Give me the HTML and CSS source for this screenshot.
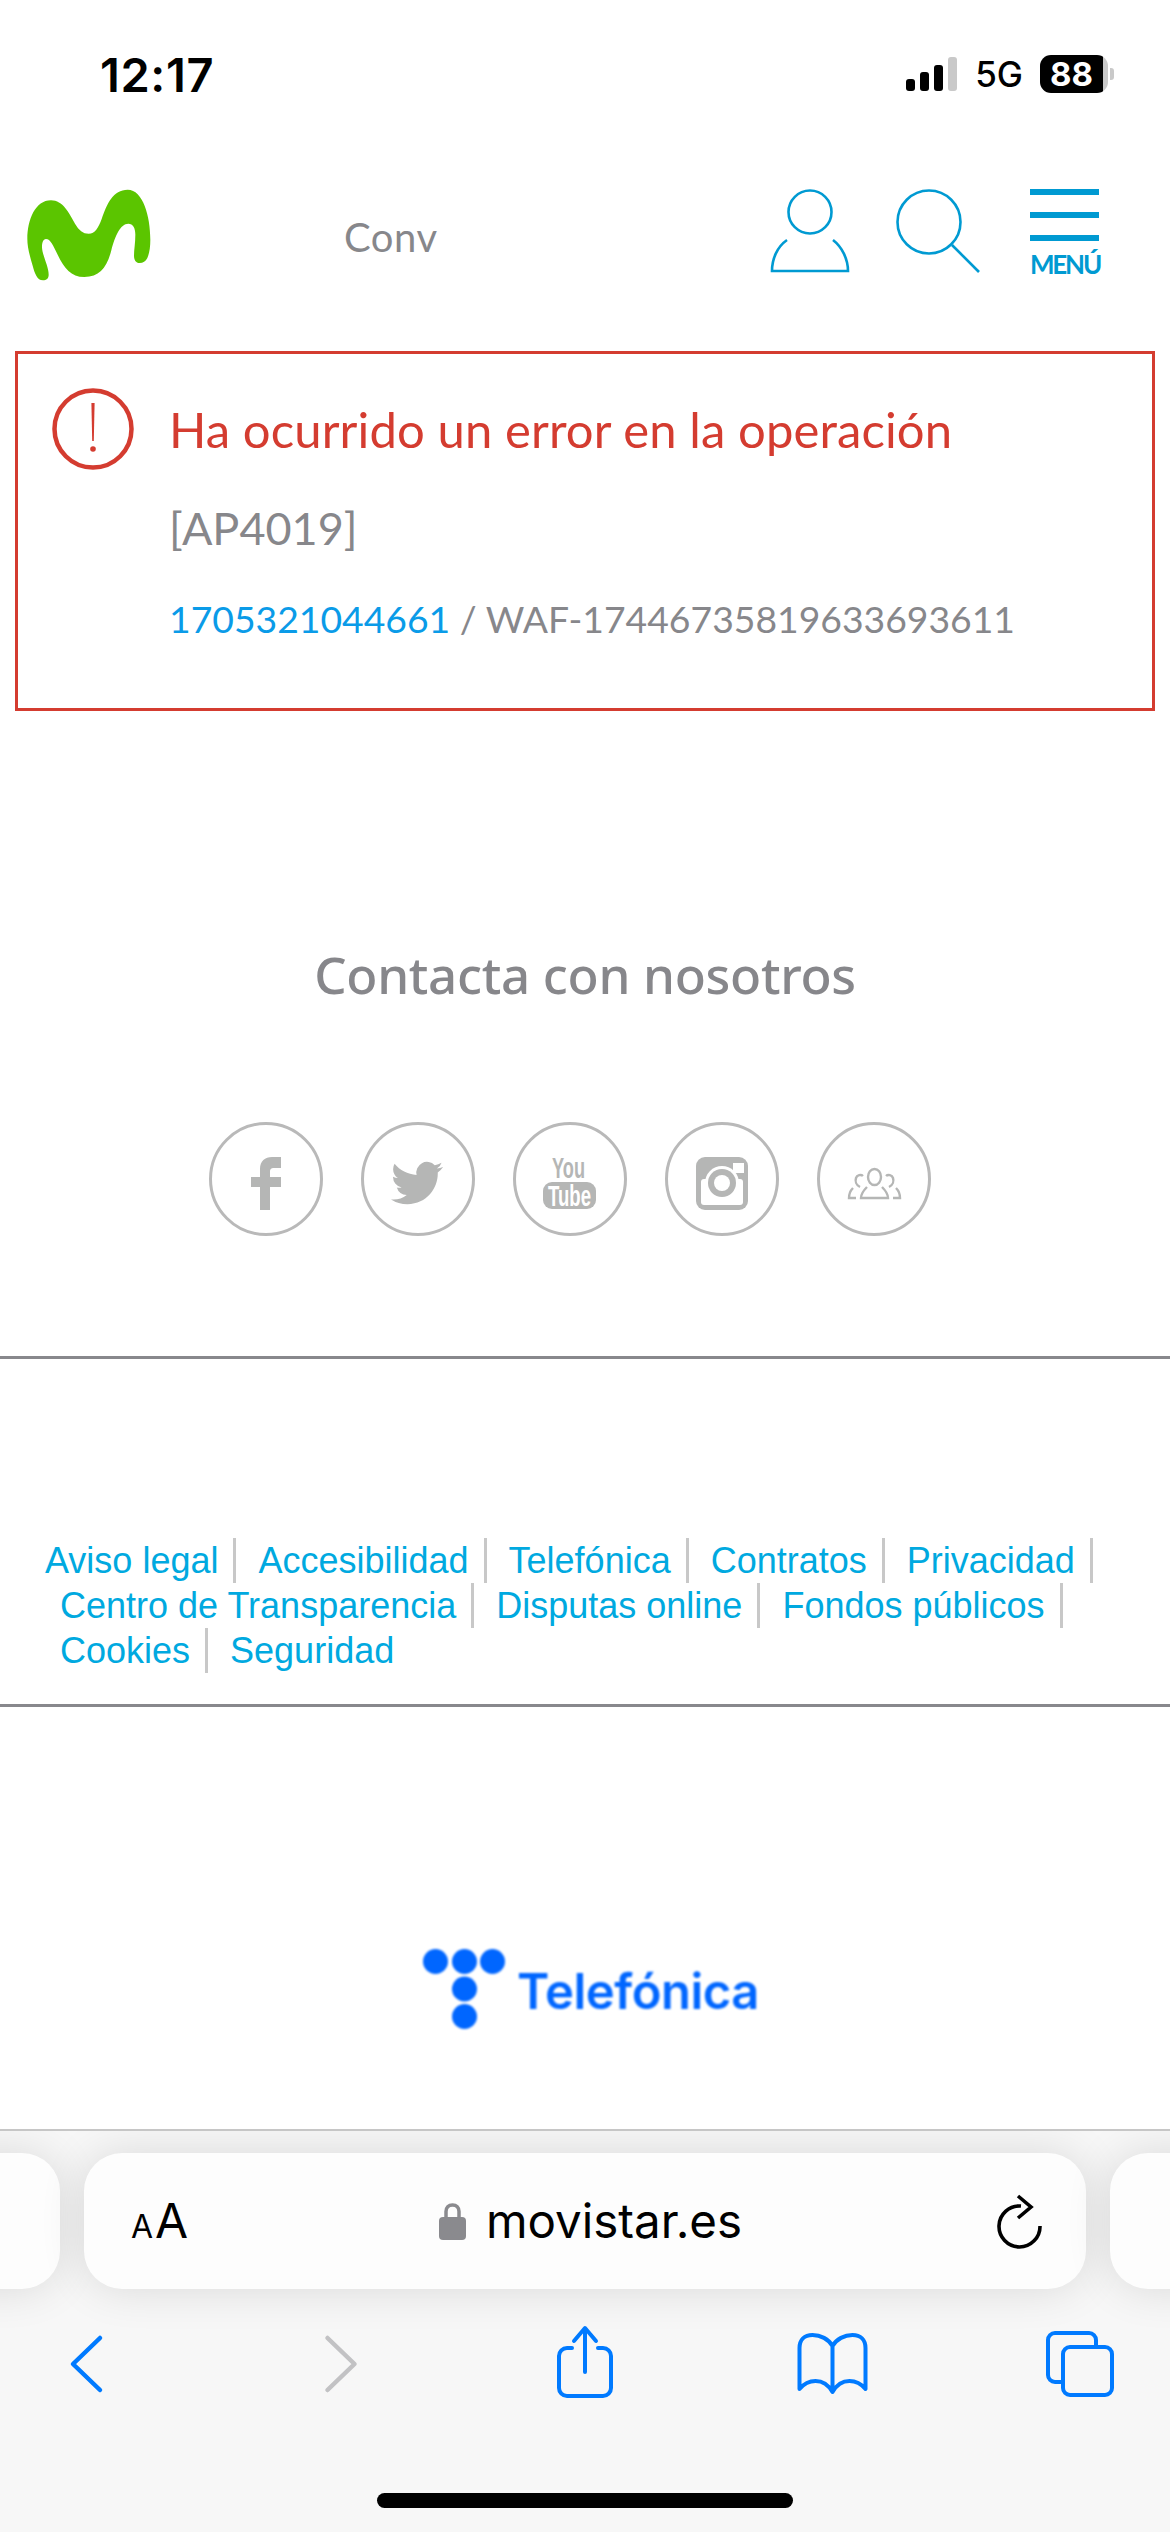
FILE: index.html
```html
<!DOCTYPE html>
<html lang="es">
<head>
  <meta charset="UTF-8">
  <title>Movistar</title>
  <link rel="stylesheet" href="styles.css">
</head>
<body>

  <div class="page">

    <div class="status">
      <span class="time">12:17</span>
      <div class="status-right">
        <div class="signal">
          <i class="bar b1"></i><i class="bar b2"></i><i class="bar b3"></i><i class="bar b4"></i>
        </div>
        <span class="net">5G</span>
        <div class="battery">88</div>
        <i class="battery-nub"></i>
      </div>
    </div>

    <header class="header">
      <svg class="logo" viewBox="80 88 372 276">
        <path fill="#5bc500" d="M128 362C110 362 103 340 97 318C88 288 81 262 81 238C81 180 105 122 152 122C188 122 206 160 224 192C236 212 248 222 265 222C284 222 294 205 304 178C320 132 338 90 382 90C428 90 450 170 450 240C450 262 447 282 441 295C436 305 428 310 418 310C406 310 401 300 401 288C401 270 405 250 405 225C405 205 398 192 384 192C360 192 344 230 333 272C320 322 298 352 252 352C212 352 192 326 172 285C158 256 150 238 137 238C128 238 125 250 125 262C125 285 145 320 145 345C145 356 138 362 128 362Z"/>
      </svg>
      <span class="conv">Conv</span>
      <svg class="ico-user" viewBox="0 0 80 84" fill="none" stroke="#009ad2" stroke-width="2.6">
        <circle cx="40" cy="23" r="21.5"/>
        <path d="M17 51C7 58 2 70 2 82H78C78 70 72 58 63 51"/>
      </svg>
      <svg class="ico-search" viewBox="0 0 84 84" fill="none" stroke="#009ad2" stroke-width="2.6">
        <circle cx="33" cy="33" r="31.5"/>
        <path d="M56 56L83 83"/>
      </svg>
      <div class="menu">
        <i class="menu-line"></i>
        <i class="menu-line"></i>
        <i class="menu-line"></i>
        <span class="menu-text">MENÚ</span>
      </div>
    </header>

    <section class="error">
      <svg class="error-ico" viewBox="0 0 84 84" fill="none" stroke="#d43c30" stroke-width="4.5">
        <circle cx="42" cy="42" r="38.5"/>
        <path d="M40.4 16H43.6L42.8 54H41.2Z" fill="#d43c30" stroke="none"/>
        <circle cx="42" cy="62" r="2.8" fill="#d43c30" stroke="none"/>
      </svg>
      <div class="error-text">
        <h1 class="error-title">Ha ocurrido un error en la operación</h1>
        <p class="error-code">[AP4019]</p>
        <p class="error-ref"><a class="ref-link">1705321044661</a> / WAF-17446735819633693611</p>
      </div>
    </section>

    <h2 class="contact">Contacta con nosotros</h2>

    <div class="social">
      <a class="circle">
        <svg viewBox="0 0 114 114"><path d="M51 88V65H42V55H51V47C51 39 56 35 63 35H72V46H65C62 46 61 47 61 50V55H72V65H61V88Z"/></svg>
      </a>
      <a class="circle">
        <svg viewBox="0 0 114 114"><path transform="translate(30 35) scale(2.17)" d="M23.953 4.57a10 10 0 01-2.825.775 4.958 4.958 0 002.163-2.723c-.951.555-2.005.959-3.127 1.184a4.92 4.92 0 00-8.384 4.482C7.69 8.095 4.067 6.13 1.64 3.162a4.822 4.822 0 00-.666 2.475c0 1.71.87 3.213 2.188 4.096a4.904 4.904 0 01-2.228-.616v.06a4.923 4.923 0 003.946 4.827 4.996 4.996 0 01-2.212.085 4.936 4.936 0 004.604 3.417 9.867 9.867 0 01-6.102 2.105c-.39 0-.779-.023-1.17-.067a13.995 13.995 0 007.557 2.209c9.053 0 13.998-7.496 13.998-13.985 0-.21 0-.42-.015-.63A9.935 9.935 0 0024 4.59z"/></svg>
      </a>
      <a class="circle">
        <svg viewBox="0 0 114 114">
          <text class="yt-you" x="39" y="56" textLength="33" lengthAdjust="spacingAndGlyphs">You</text>
          <rect x="30" y="60" width="53" height="27" rx="9"/>
          <text class="yt-tube" x="35" y="84" textLength="43" lengthAdjust="spacingAndGlyphs">Tube</text>
        </svg>
      </a>
      <a class="circle">
        <svg viewBox="0 0 114 114">
          <rect x="31" y="35" width="52" height="53" rx="9"/>
          <rect class="cut" x="36" y="57" width="42" height="26" rx="3"/>
          <circle class="cut" cx="57" cy="61" r="17"/>
          <circle cx="57" cy="61" r="14"/>
          <circle class="cut" cx="57" cy="61" r="8"/>
          <rect class="cut" x="68" y="41" width="11" height="10"/>
        </svg>
      </a>
      <a class="circle">
        <svg viewBox="0 0 114 114" class="people">
          <ellipse cx="57.5" cy="55" rx="6.5" ry="8"/>
          <path d="M50 65C46 69 44 72 44 76H71C71 72 69 69 65 65"/>
          <path d="M43 65C39 63 38 59 39 56C40 53 44 52 46 54"/>
          <path d="M72 65C76 63 77 59 76 56C75 53 71 52 69 54"/>
          <path d="M36 66C33 69 32 72 32 76H39"/>
          <path d="M79 66C82 69 83 72 83 76H76"/>
        </svg>
      </a>
    </div>

    <hr class="rule rule-top">

    <ul class="links">
      <li class="first">Aviso legal</li>
      <li>Accesibilidad</li>
      <li>Telefónica</li>
      <li>Contratos</li>
      <li>Privacidad</li>
      <li>Centro de Transparencia</li>
      <li>Disputas online</li>
      <li>Fondos públicos</li>
      <li>Cookies</li>
      <li class="last">Seguridad</li>
    </ul>

    <hr class="rule rule-bottom">

    <div class="brand">
      <svg class="brand-dots" viewBox="0 0 84 84">
        <circle cx="12.5" cy="12.5" r="12.5"/>
        <circle cx="41.5" cy="12.5" r="12.5"/>
        <circle cx="69.5" cy="12.5" r="12.5"/>
        <circle cx="41.5" cy="40" r="12.5"/>
        <circle cx="41.5" cy="67.5" r="12.5"/>
      </svg>
      <span class="brand-name">Telefónica</span>
    </div>

    <div class="toolbar">
      <div class="tabs-row">
        <div class="pill pill-side"></div>
        <div class="pill pill-main">
          <span class="aa"><small>A</small>A</span>
          <div class="address">
            <svg class="lock" viewBox="0 0 27 38">
              <path d="M7 17V9.5C7 5.5 9.5 3 13.5 3S20 5.5 20 9.5V17" fill="none" stroke="#8a8a8e" stroke-width="3.5"/>
              <rect y="15" width="27" height="23" rx="4" fill="#8a8a8e"/>
            </svg>
            <span class="url">movistar.es</span>
          </div>
          <svg class="reload" viewBox="996 2190 48 58" fill="none" stroke="#000" stroke-width="3.6">
            <path d="M1040 2224A20.5 20.5 0 1 1 1021 2204"/>
            <path d="M1018 2194L1031 2205L1018 2216"/>
          </svg>
        </div>
        <div class="pill pill-side"></div>
      </div>

      <div class="nav">
        <svg viewBox="51 2322 70 80" fill="none" stroke="#007aff" stroke-width="4.5" stroke-linecap="round" stroke-linejoin="round">
          <path d="M100 2338L73 2364L100 2390" />
        </svg>
        <svg viewBox="299.5 2322 70 80" fill="none" stroke="#c2c2c4" stroke-width="4.5" stroke-linecap="round" stroke-linejoin="round">
          <path d="M327 2338L354 2364L327 2390" />
        </svg>
        <svg viewBox="548 2322 70 80" fill="none" stroke="#007aff" stroke-width="4" stroke-linecap="round" stroke-linejoin="round">
          <path d="M572 2348H567A8 8 0 0 0 559 2356V2388A8 8 0 0 0 567 2396H603A8 8 0 0 0 611 2388V2356A8 8 0 0 0 603 2348H598"/>
          <path d="M585 2372V2329M574 2341L585 2328L596 2341"/>
        </svg>
        <svg viewBox="796.5 2322 70 80" fill="none" stroke="#007aff" stroke-width="4" stroke-linejoin="round">
          <path d="M832 2346C828 2339 820 2335 812 2335C804 2335 799 2340 799 2348V2389C804 2383 810 2381 815 2381C822 2381 828 2385 832 2392C836 2385 842 2381 849 2381C854 2381 860 2383 865 2389V2348C865 2340 860 2335 852 2335C844 2335 836 2339 832 2346ZM832 2346V2392"/>
        </svg>
        <svg viewBox="1045 2322 70 80" fill="none" stroke="#007aff" stroke-width="4">
          <path d="M1063 2382H1055A7 7 0 0 1 1048 2375V2340A7 7 0 0 1 1055 2333H1089A7 7 0 0 1 1096 2340V2347"/>
          <rect x="1063" y="2347" width="49" height="48" rx="7"/>
        </svg>
      </div>

      <div class="home-bar"></div>
    </div>

  </div>

</body>
</html>
```

FILE: styles.css
```css
* {
  box-sizing: border-box;
}

html, body {
  margin: 0;
  padding: 0;
}

body {
  background: #fff;
  font-family: 'Lato', sans-serif;
  color: #87878b;
}

.page {
  width: 1170px;
  height: 2532px;
  overflow: hidden;
  display: flex;
  flex-direction: column;
}

/* status bar */
.status {
  height: 148px;
  display: flex;
  align-items: center;
  justify-content: space-between;
  padding: 0 56px 0 100px;
  color: #000;
  font-family: 'Inter', sans-serif;
}

.time {
  font-size: 47px;
  font-weight: 600;
  letter-spacing: 0.6px;
}

.status-right {
  display: flex;
  align-items: center;
}

.signal {
  display: flex;
  align-items: flex-end;
  gap: 5px;
  height: 34px;
  margin-right: 18px;
}

.bar {
  width: 9px;
  border-radius: 3px;
  background: #000;
}

.b1 { height: 12px; }
.b2 { height: 19px; }
.b3 { height: 26px; }
.b4 { height: 34px; background: #c9c9c9; }

.net {
  font-size: 35px;
  font-weight: 500;
  margin-right: 17px;
}

.battery {
  width: 68px;
  height: 38px;
  border-radius: 11px;
  background: linear-gradient(90deg, #000 92%, #c9c9c9 92%);
  color: #fff;
  font-size: 33px;
  font-weight: 700;
  line-height: 38px;
  padding-left: 10px;
}

.battery-nub {
  width: 4px;
  height: 12px;
  margin-left: 2px;
  border-radius: 0 3px 3px 0;
  background: #c9c9c9;
}

/* header */
.header {
  height: 203px;
  padding: 41px 71px 0 27px;
  display: flex;
  align-items: flex-start;
}

.logo {
  width: 124px;
  height: 92px;
}

.conv {
  margin-left: 193px;
  margin-top: 24px;
  font-size: 40px;
  line-height: 48px;
  letter-spacing: 0.5px;
}

.ico-user {
  width: 80px;
  height: 84px;
  margin-left: auto;
}

.ico-search {
  width: 84px;
  height: 84px;
  margin-left: 46px;
}

.menu {
  width: 69px;
  margin-left: 50px;
  display: flex;
  flex-direction: column;
  gap: 17px;
}

.menu-line {
  display: block;
  height: 6px;
  background: #009ad2;
}

.menu-text {
  margin-top: -7px;
  color: #009ad2;
  font-family: 'Lato', sans-serif;
  font-size: 26px;
  font-weight: 700;
  line-height: 26px;
  letter-spacing: -2.2px;
  white-space: nowrap;
}

/* error box */
.error {
  height: 360px;
  margin: 0 15px;
  border: 3px solid #d43c30;
  display: flex;
  align-items: flex-start;
  padding: 33px 0 0 33px;
}

.error-ico {
  width: 84px;
  height: 84px;
  flex: none;
}

.error-text {
  margin-left: 34px;
}

.error-title {
  margin: 0;
  padding-top: 12px;
  color: #d43c30;
  font-size: 49px;
  font-weight: 400;
  line-height: 60px;
  letter-spacing: 0.1px;
}

.error-code {
  margin: 42px 0 0;
  font-size: 45px;
  line-height: 54px;
}

.error-ref {
  margin: 41px 0 0;
  font-size: 37.3px;
  line-height: 46px;
}

.ref-link {
  color: #0a9be8;
}

/* contact */
.contact {
  margin: 230px 0 0;
  text-align: center;
  font-family: 'Noto Sans', sans-serif;
  font-size: 51px;
  font-weight: 500;
  line-height: 66px;
  letter-spacing: -0.3px;
}

.social {
  display: flex;
  justify-content: center;
  gap: 38px;
  margin-top: 115px;
  padding-right: 30px;
}

.circle {
  display: block;
  width: 114px;
  height: 114px;
  border: 3px solid #b9b9b9;
  border-radius: 50%;
}

.circle svg {
  display: block;
  margin: -3px;
  width: 114px;
  height: 114px;
  fill: #b5b6b5;
}

.circle .cut {
  fill: #fff;
}

.yt-you, .yt-tube {
  font-family: 'Liberation Sans', sans-serif;
  font-weight: 700;
  font-size: 29px;
}

.yt-tube {
  fill: #fff;
}

.circle .people {
  fill: none;
  stroke: #b5b6b5;
  stroke-width: 2.4;
}

.rule {
  margin: 0;
  border: 0;
  height: 3px;
  background: #88888c;
}

.rule-top {
  margin-top: 120px;
}

/* footer links */
.links {
  list-style: none;
  margin: 179px 0 0;
  padding: 0 0 0 38px;
  display: flex;
  flex-wrap: wrap;
  color: #00a9e0;
  font-family: 'Liberation Sans', sans-serif;
  font-size: 36px;
  line-height: 45px;
}

.links li {
  padding: 0 15px 0 22px;
  border-right: 3px solid #c8c8c8;
}

.links li.first {
  padding-left: 7px;
}

.links li.last {
  border-right: 0;
}

.rule-bottom {
  margin-top: 31px;
}

/* telefonica */
.brand {
  margin-top: 242px;
  display: flex;
  align-items: flex-start;
  padding-left: 423px;
  color: #0066ff;
  filter: blur(0.8px);
}

.brand-dots {
  width: 84px;
  height: 84px;
  fill: #0066ff;
}

.brand-name {
  margin-left: 10px;
  margin-top: 14px;
  font-family: 'Inter', sans-serif;
  font-size: 49px;
  font-weight: 600;
  line-height: 58px;
  letter-spacing: -0.5px;
}

/* safari toolbar */
.toolbar {
  margin-top: auto;
  height: 403px;
  border-top: 2px solid #c6c6c6;
  background: #f7f7f7;
  overflow: hidden;
}

.tabs-row {
  display: flex;
  gap: 24px;
  margin: 22px 0 0 -100px;
  width: 1370px;
}

.pill {
  height: 136px;
  background: #fdfdfd;
  border-radius: 38px;
  box-shadow: 0 0 45px rgba(0, 0, 0, 0.12);
}

.pill-side {
  width: 160px;
}

.pill-main {
  width: 1002px;
  display: flex;
  align-items: center;
  justify-content: space-between;
  padding: 0 45px 0 47px;
  color: #000;
  font-family: 'Inter', sans-serif;
}

.aa {
  font-size: 48px;
  line-height: 1;
  width: 57px;
  white-space: nowrap;
}

.aa small {
  font-size: 32px;
  margin-right: 2px;
}

.address {
  display: flex;
  align-items: center;
  gap: 20px;
  margin-left: -3px;
}

.lock {
  width: 27px;
  height: 38px;
}

.url {
  font-size: 47.5px;
  line-height: 56px;
}

.reload {
  width: 48px;
  height: 58px;
  margin-right: -3px;
}

.nav {
  margin-top: 33px;
  height: 80px;
  padding: 0 55px 0 51px;
  display: flex;
  justify-content: space-between;
}

.nav svg {
  width: 70px;
  height: 80px;
  overflow: visible;
}

.home-bar {
  width: 416px;
  height: 15px;
  margin: 91px auto 0;
  border-radius: 8px;
  background: #000;
}
```
